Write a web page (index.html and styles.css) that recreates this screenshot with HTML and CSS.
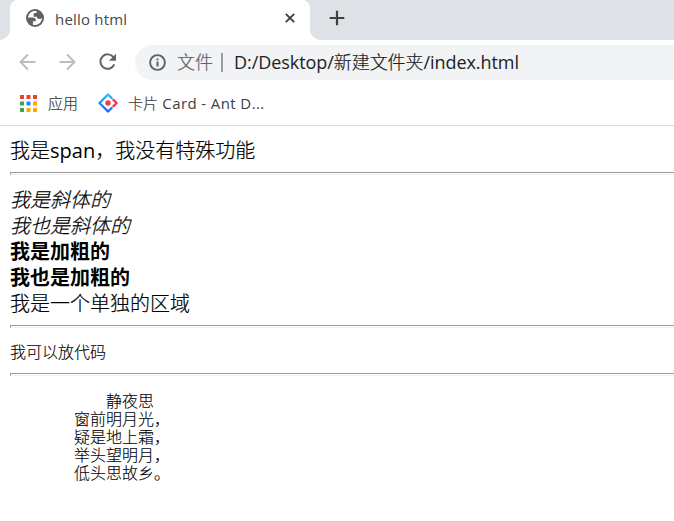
FILE: index.html
```html
<!DOCTYPE html>
<html lang="zh-CN">
<head>
<meta charset="utf-8">
<title>hello html</title>
<link rel="stylesheet" href="styles.css">
</head>
<body>
<header class="tabstrip">
  <div class="tab">
    <svg class="globe" viewBox="0 0 18 18"><circle cx="9" cy="9" r="9" fill="#5f6368"/><path fill="#fff" d="M10.600 2.200C6.500 1.100 2.600 4 2 8.500h4.500c2.200 0 3.300.9 3.300 2.500v1.300H6.900v3.400c4.800 1.300 8.900-2 9.100-6.400-.7.500-1.500.7-2.600.7-1.600 0-2.500-.8-2.500-2.200H7.600V5.700c0-1.100.6-1.600 1.600-1.600h1.400z"/></svg>
    <span class="tab-title">hello html</span>
    <svg class="close" viewBox="0 0 10 10"><path d="M.8.8l8.400 8.400M9.200.8L.8 9.200" stroke="#3c4043" stroke-width="1.900"/></svg>
  </div>
  <svg class="plus" viewBox="0 0 16 16"><path d="M8 .7v14.600M.7 8h14.600" stroke="#3c4043" stroke-width="2.200"/></svg>
</header>
<nav class="toolbar">
  <svg class="nav-icon" viewBox="0 0 18 18"><path d="M16.500 9H2M9 1.500L1.500 9 9 16.500" fill="none" stroke="#babcbe" stroke-width="1.900"/></svg>
  <svg class="nav-icon" viewBox="0 0 18 18"><path d="M.5 9H15M8 1.500L15.500 9 8 16.500" fill="none" stroke="#babcbe" stroke-width="1.900"/></svg>
  <svg class="nav-icon" viewBox="0 0 18 18"><path d="M14.600 4.500A7.200 7.200 0 1 0 15.300 11.300" fill="none" stroke="#5f6368" stroke-width="2"/><path d="M17 .8v7h-7z" fill="#5f6368"/></svg>
  <div class="omnibox">
    <svg class="info" viewBox="0 0 17 17"><circle cx="8.500" cy="8.500" r="7.400" fill="none" stroke="#5f6368" stroke-width="1.900"/><path d="M7.500 7.500h2v5h-2zM7.500 4.400h2v1.900h-2z" fill="#5f6368"/></svg>
    <span class="scheme">文件</span>
    <span class="divider"></span>
    <span class="url"><span>D:/Desktop/</span><span class="folder">新建文件夹</span><span>/index.html</span></span>
  </div>
</nav>
<nav class="bookmarks">
  <svg class="apps" viewBox="0 0 17 17"><path fill="#ea4335" d="M0 0h4v4H0zM6.500 0h4v4h-4zM13 0h4v4h-4z"/><path fill="#34a853" d="M0 6.500h4v4H0zM0 13h4v4H0z"/><path fill="#1e88f5" d="M6.500 6.500h4v4h-4z"/><path fill="#f9ab00" d="M13 6.500h4v4h-4zM6.500 13h4v4h-4zM13 13h4v4h-4z"/></svg>
  <span class="apps-label">应用</span>
  <svg class="ant" viewBox="0 0 20 20"><defs><linearGradient id="blue" x1="0" y1="0" x2="0" y2="1"><stop offset="0" stop-color="#29bdff"/><stop offset="1" stop-color="#1268f5"/></linearGradient></defs><path d="M13.600 5L10 1.500 1.500 10l8.500 8.500 3.600-3.500" fill="none" stroke="url(#blue)" stroke-width="2.400" stroke-linejoin="round" stroke-linecap="round"/><path d="M15.500 6.900l3.100 3.100-3.100 3.100" fill="none" stroke="#f5394b" stroke-width="2.400" stroke-linecap="round" stroke-linejoin="round"/><circle cx="10" cy="10" r="2.700" fill="#f5394b"/></svg>
  <span class="card-label"><span class="cjk">卡片</span> Card - Ant D...</span>
</nav>
<main class="page">
  <div><span>我是<span class="latin">span</span>，我没有特殊功能</span></div>
  <hr>
  <div><i>我是斜体的</i></div>
  <div><em>我也是斜体的</em></div>
  <div><b>我是加粗的</b></div>
  <div><strong>我也是加粗的</strong></div>
  <div>我是一个单独的区域</div>
  <hr>
  <pre class="code">我可以放代码</pre>
  <hr>
  <pre class="poem">静夜思
窗前明月光，
疑是地上霜，
举头望明月，
低头思故乡。</pre>
</main>
</body>
</html>
```
FILE: styles.css
```css
body {
  margin: 0;
  height: 521px;
  overflow: hidden;
  background: #fff;
  color: #000;
  font-family: "Open Sans", "Noto Sans CJK SC", sans-serif;
}
svg { display: block; flex: none; }
span { white-space: nowrap; }
.tabstrip {
  display: flex;
  height: 40px;
  background: #dee1e6;
}
.tab {
  position: relative;
  box-sizing: border-box;
  display: flex;
  align-items: center;
  width: 300px;
  height: 40px;
  margin-left: 10px;
  padding: 0 15px 4px 16px;
  background: #fff;
  border-radius: 8px 8px 0 0;
}
.tab::before, .tab::after {
  content: "";
  position: absolute;
  bottom: 0;
  width: 10px;
  height: 10px;
}
.tab::before { left: -10px; background: radial-gradient(circle at 0 0, #dee1e6 9.5px, #fff 10px); }
.tab::after { right: -10px; background: radial-gradient(circle at 100% 0, #dee1e6 9.5px, #fff 10px); }
.globe { width: 18px; height: 18px; }
.tab-title { margin-left: 11px; padding-top: 2px; font-size: 15px; line-height: 20px; letter-spacing: .2px; color: #45494d; }
.close { width: 10px; height: 10px; margin-left: auto; }
.plus { width: 16px; height: 16px; margin: 10px 0 0 19px; }
.toolbar {
  display: flex;
  align-items: center;
  height: 45px;
  padding-left: 19px;
}
.nav-icon { width: 18px; height: 18px; margin: 0 22px 2px 0; }
.omnibox {
  flex: 1;
  display: flex;
  align-items: center;
  box-sizing: border-box;
  height: 35px;
  margin-left: -4px;
  padding-left: 14px;
  border-radius: 18px 0 0 18px;
  background: #f1f3f4;
  font-size: 18px;
  line-height: 26px;
}
.info { width: 17px; height: 17px; }
.scheme { margin: -2px 0 0 11px; color: #5f6368; font-weight: 300; -webkit-text-stroke: .2px; }
.divider { width: 2px; height: 19px; margin: 0 11px 0 8px; background: #9b9ea1; }
.url { display: flex; margin-top: -2px; letter-spacing: -.06px; color: #202124; }
.folder { font-weight: 300; -webkit-text-stroke: .2px; }
.bookmarks {
  display: flex;
  align-items: center;
  height: 36px;
  padding: 0 0 4px 20px;
  border-bottom: 1px solid #dadce0;
  font-size: 15px;
  line-height: 20px;
  color: #3c4043;
}
.apps { width: 17px; height: 17px; }
.apps-label { margin-left: 11px; font-weight: 300; -webkit-text-stroke: .2px; }
.ant { width: 20px; height: 20px; margin-left: 20px; }
.card-label { margin-left: 10px; letter-spacing: .4px; }
.cjk { font-weight: 300; letter-spacing: 0; -webkit-text-stroke: .2px; }
.page {
  padding: 11px 0 0 10px;
  font-size: 20px;
  line-height: 26px;
  font-weight: 300;
  -webkit-text-stroke: .2px;
}
.page > div { height: 25px; padding-top: 1px; white-space: nowrap; }
.latin { font-weight: 400; -webkit-text-stroke: 0; }
b, strong { font-weight: 700; -webkit-text-stroke: 0; }
hr {
  box-sizing: border-box;
  height: 3px;
  margin: 9px 0 11px;
  border: 0 solid #999;
  border-top-width: 1px;
  border-left-width: 1px;
  border-bottom: 1px solid #eee;
}
pre {
  margin: 0;
  font: 300 16px/18px "Noto Sans CJK SC", monospace;
  -webkit-text-stroke: .12px;
}
.code { margin: 14px 0 13px; }
.poem { padding: 4px 0 0 64px; text-indent: 32px; }
```
